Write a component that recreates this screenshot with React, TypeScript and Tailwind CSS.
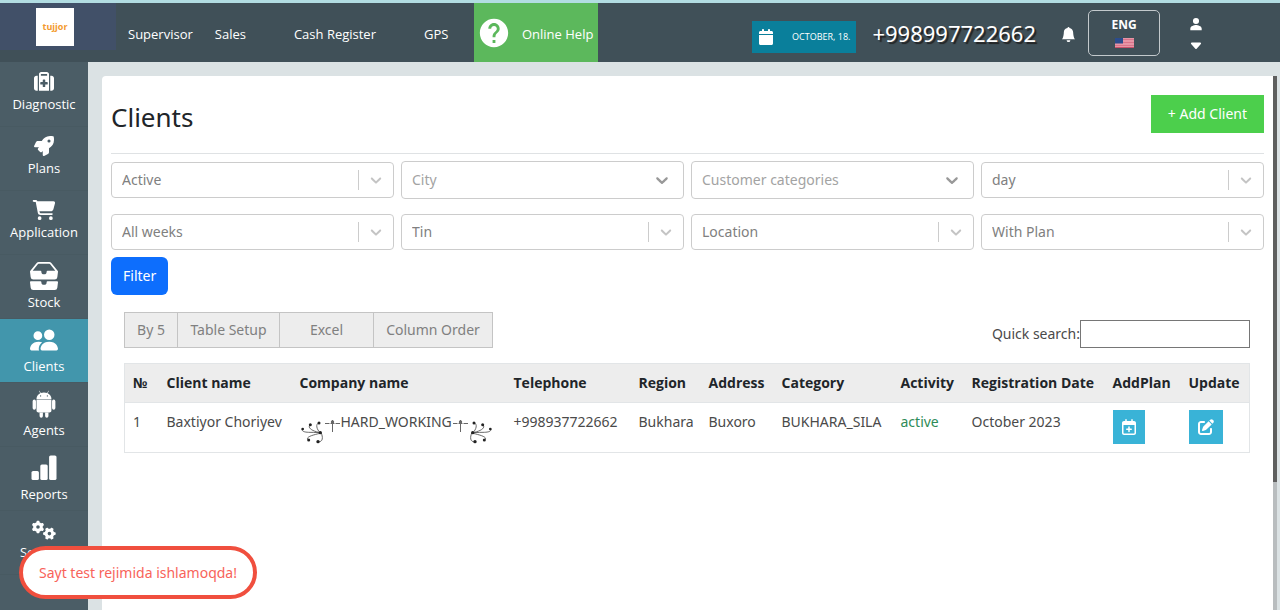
import React from "react";
import {
  FaSuitcaseMedical,
  FaCartShopping,
  FaGears,
  FaRegCalendarPlus,
  FaPenToSquare,
  FaCalendar,
} from "react-icons/fa6";
import { FaRocket } from "react-icons/fa";
import { DiAndroid } from "react-icons/di";
import { IoPersonSharp } from "react-icons/io5";
import { BsInboxesFill, BsPeopleFill, BsBellFill, BsCaretDownFill } from "react-icons/bs";
import { MdHelp } from "react-icons/md";

type IconProps = { className?: string };
type SideItem = {
  label: string;
  icon: React.ComponentType<IconProps>;
  large?: boolean;
  active?: boolean;
};

function BarsIcon({ className }: IconProps) {
  return (
    <svg viewBox="0 0 28 28" className={className} fill="currentColor" aria-hidden="true">
      <rect x="1.5" y="17" width="7.4" height="9" rx="1.6" />
      <rect x="10.3" y="10.5" width="7.4" height="15.5" rx="1.6" />
      <rect x="19.1" y="1.5" width="7.4" height="24.5" rx="1.6" />
    </svg>
  );
}

const sideItems: SideItem[] = [
  { label: "Diagnostic", icon: FaSuitcaseMedical },
  { label: "Plans", icon: FaRocket },
  { label: "Application", icon: FaCartShopping },
  { label: "Stock", icon: BsInboxesFill, large: true },
  { label: "Clients", icon: BsPeopleFill, large: true, active: true },
  { label: "Agents", icon: DiAndroid, large: true },
  { label: "Reports", icon: BarsIcon, large: true },
  { label: "Settings", icon: FaGears },
];

type Filter = { label: string; plain?: boolean };

const filters: Filter[] = [
  { label: "Active" },
  { label: "City", plain: true },
  { label: "Customer categories", plain: true },
  { label: "day" },
  { label: "All weeks" },
  { label: "Tin" },
  { label: "Location" },
  { label: "With Plan" },
];

const columns = [
  { title: "№", width: "w-[34px]" },
  { title: "Client name", width: "w-[133px]" },
  { title: "Company name", width: "w-[214px]" },
  { title: "Telephone", width: "w-[125px]" },
  { title: "Region", width: "w-[70px]" },
  { title: "Address", width: "w-[73px]" },
  { title: "Category", width: "w-[119px]" },
  { title: "Activity", width: "w-[71px]" },
  { title: "Registration Date", width: "w-[141px]" },
  { title: "AddPlan", width: "w-[76px]" },
  { title: "Update", width: "w-[69px]" },
];

function Chevron({ className }: IconProps) {
  return (
    <svg viewBox="0 0 20 20" className={className} fill="currentColor" aria-hidden="true">
      <path d="M4.516 7.548c0.436-0.446 1.043-0.481 1.576 0l3.908 3.747 3.908-3.747c0.533-0.481 1.141-0.446 1.574 0 0.436 0.445 0.408 1.197 0 1.615-0.406 0.418-4.695 4.502-4.695 4.502-0.217 0.223-0.502 0.335-0.787 0.335s-0.57-0.112-0.789-0.335c0 0-4.287-4.084-4.695-4.502s-0.436-1.17 0-1.615z" />
    </svg>
  );
}

function FilterSelect({ label, plain }: Filter) {
  return (
    <div
      className={`flex items-center rounded border border-[#cccccc] bg-white ${plain ? "h-[38px]" : "h-9"}`}
    >
      <select
        aria-label={label}
        className={`h-full min-w-0 flex-1 appearance-none bg-transparent px-[10px] outline-none ${
          plain ? "text-[#a3a3a3]" : "text-[#808080]"
        }`}
      >
        <option>{label}</option>
      </select>
      {!plain && <span className="h-5 w-px bg-[#cccccc]" />}
      <span className={plain ? "px-[11px] text-[#999999]" : "px-2 text-[#c4c4c4]"}>
        <Chevron className={plain ? "size-5" : "size-[18px]"} />
      </span>
    </div>
  );
}

function Flourish({ flipped }: { flipped?: boolean }) {
  return (
    <svg
      viewBox="0 0 72 72"
      className={`size-6 shrink-0 self-end ${flipped ? "-scale-x-100" : ""}`}
      fill="none"
      stroke="#444"
      strokeWidth="2.4"
      strokeLinecap="round"
      aria-hidden="true"
    >
      <path d="M7 27C3 34 14 37 30 37S52 38 60 38" />
      <path d="M30 14C20 25 40 34 60 38" />
      <path d="M57 8C45 12 50 28 60 38" />
      <path d="M25 60C14 52 34 46 60 40" />
      <path d="M54 65C70 68 69 50 64 40" />
      <g fill="#222" stroke="none">
        <circle cx="8" cy="27" r="4" />
        <circle cx="31" cy="14" r="4.5" />
        <circle cx="57" cy="9" r="4.5" />
        <circle cx="61" cy="38" r="5" />
        <circle cx="26" cy="60" r="4.5" />
        <circle cx="54" cy="65" r="5" />
      </g>
    </svg>
  );
}

function Dagger() {
  return (
    <svg viewBox="0 0 17 20" className="h-5 w-[17px] shrink-0" fill="none" stroke="#666" aria-hidden="true">
      <path d="M1 11.5H5.5M6.5 11.5H10.5M11.5 11.5H16" strokeWidth="1.2" />
      <path d="M8.5 8V20" strokeWidth="1" />
      <circle cx="8.5" cy="10" r="1.7" fill="#666" stroke="none" />
    </svg>
  );
}

function UsFlag() {
  return (
    <svg viewBox="0 0 19 10" className="h-[10px] w-[19px]" aria-hidden="true">
      <rect width="19" height="10" fill="#e795a5" />
      <path d="M0 1.5h19M0 4.5h19M0 7.5h19" stroke="#d9748a" strokeWidth="1" />
      <path d="M0 9.5h19" stroke="#c9516b" strokeWidth="1" />
      <rect width="8" height="5.5" fill="#2b4c8c" />
    </svg>
  );
}

function Header() {
  return (
    <header className="flex h-[62px] shrink-0 border-t-[3px] border-[#b2dde2] bg-[#405058] text-[13px] text-white">
      <div className="flex h-[47px] w-[116px] shrink-0 bg-[#415068] pt-[5px] pl-9">
        <div className="flex size-[38px] items-center justify-center bg-white pb-px font-['Open_Sans',sans-serif] text-[9px] font-bold text-[#f39a2e]">
          tujjor
        </div>
      </div>
      <nav className="flex shrink-0 items-stretch pl-3">
        <a href="#supervisor" className="flex items-center pt-[3px]">Supervisor</a>
        <a href="#sales" className="ml-[22px] flex items-center pt-[3px]">Sales</a>
        <a href="#cash" className="ml-12 flex items-center pt-[3px]">Cash Register</a>
        <a href="#gps" className="ml-12 flex items-center pt-[3px]">GPS</a>
        <a href="#help" className="ml-[26px] flex w-[124px] items-center justify-between bg-[#5cb85c] pr-[5px] pl-[3px]">
          <MdHelp className="size-[34px]" />
          <span className="pt-[3px]">Online Help</span>
        </a>
      </nav>
      <div className="mr-[76px] ml-auto flex shrink-0 items-center">
        <div className="mt-[18px] flex h-8 w-[104px] items-center justify-between self-start bg-[#0a7f9b] px-[6px]">
          <FaCalendar className="size-4" />
          <span className="text-[9px]">OCTOBER, 18.</span>
        </div>
        <span className="ml-4 font-['Noto_Sans',sans-serif] text-[22px] leading-7 [text-shadow:2px_2px_1px_#222]">
          +998997722662
        </span>
        <button aria-label="Notifications" className="mt-1 ml-[25px]">
          <BsBellFill className="size-[15px]" />
        </button>
        <button className="ml-3 flex h-[46px] w-[72px] flex-col items-center gap-1 rounded-[5px] border border-[#c3c9cc] pt-[5px] text-[12px] leading-[18px] font-bold">
          ENG
          <UsFlag />
        </button>
        <button aria-label="Account" className="mt-1 ml-7 flex w-4 flex-col items-center gap-2">
          <IoPersonSharp className="size-[14px]" />
          <BsCaretDownFill className="size-[14px]" />
        </button>
      </div>
    </header>
  );
}

function Sidebar() {
  return (
    <nav className="w-[88px] shrink-0 overflow-hidden bg-[#4b5d66] pt-px text-[13px] leading-5 text-white">
      {sideItems.map(({ label, icon: Icon, large, active }) => (
        <a
          key={label}
          href={`#${label.toLowerCase()}`}
          className={`flex h-16 flex-col items-center gap-0.5 border-b border-[#485a62] ${
            large ? "pt-[7px]" : "pt-[9px]"
          } ${active ? "bg-[#4296ac]" : ""}`}
        >
          <Icon className={large ? "size-7" : "h-5 w-6"} />
          <span>{label}</span>
        </a>
      ))}
    </nav>
  );
}

function ClientsTable() {
  return (
    <table className="mt-[15px] w-full table-fixed border-collapse border border-[#e2e5e7] text-left text-[#4a4a4a]">
      <thead className="bg-[#ededed] font-['Open_Sans',sans-serif] text-[#212529]">
        <tr className="h-[39px]">
          {columns.map((column) => (
            <th key={column.title} className={`px-2 font-bold whitespace-nowrap ${column.width}`}>
              {column.title}
            </th>
          ))}
        </tr>
      </thead>
      <tbody>
        <tr className="h-[50px] border-t border-[#e2e5e7] align-top whitespace-nowrap *:px-2 *:pt-[9px]">
          <td>1</td>
          <td>Baxtiyor Choriyev</td>
          <td>
            <div className="flex h-8">
              <Flourish />
              <Dagger />
              <span>HARD_WORKING</span>
              <Dagger />
              <Flourish flipped />
            </div>
          </td>
          <td>+998937722662</td>
          <td>Bukhara</td>
          <td>Buxoro</td>
          <td>BUKHARA_SILA</td>
          <td className="text-[#2e8b57]">active</td>
          <td>October 2023</td>
          <td className="pt-[7px]!">
            <button aria-label="Add plan" className="flex h-[34px] w-8 items-center justify-center bg-[#39b3d7] text-white">
              <FaRegCalendarPlus className="size-4" />
            </button>
          </td>
          <td className="pt-[7px]!">
            <button aria-label="Update client" className="flex size-[34px] items-center justify-center bg-[#39b3d7] text-white">
              <FaPenToSquare className="size-4" />
            </button>
          </td>
        </tr>
      </tbody>
    </table>
  );
}

export default function App() {
  return (
    <div className="flex h-screen flex-col overflow-hidden bg-[#dbe2e4] font-['Open_Sans','Noto_Sans',sans-serif] text-[14px] leading-5">
      <Header />
      <div className="flex min-h-0 flex-1">
        <Sidebar />
        <div className="flex min-w-0 flex-1 pt-[14px] pr-[3px] pl-[14px] font-['Noto_Sans',sans-serif]">
          <main className="min-w-0 flex-1 overflow-hidden rounded-tl bg-white pt-[19px] pr-[9px] pl-[9px]">
            <div className="flex justify-between border-b border-[#dfe2e4] pb-[18px]">
              <h1 className="pt-1 text-[26px] leading-9 text-[#212529]">Clients</h1>
              <button className="h-[38px] bg-[#4ccf4c] px-[17px] text-white">+ Add Client</button>
            </div>
            <div className="mt-[7px] grid grid-cols-4 items-center gap-x-[7px] gap-y-[15px]">
              {filters.map((filter) => (
                <FilterSelect key={filter.label} {...filter} />
              ))}
            </div>
            <button className="mt-[7px] h-[38px] rounded-md bg-[#0d6efd] px-3 text-white">Filter</button>
            <section className="mt-[17px] pr-[14px] pl-[13px]">
              <div className="flex items-center justify-between">
                <div className="flex h-9 divide-x divide-[#c4c4c4] border border-[#c4c4c4] bg-[#ededed] text-[#808080]">
                  <button className="w-[53px]">By 5</button>
                  <button className="w-[102px]">Table Setup</button>
                  <button className="w-[94px]">Excel</button>
                  <button className="w-[118px]">Column Order</button>
                </div>
                <label className="flex items-center pt-2 text-[#4a4a4a]">
                  Quick search:
                  <input type="text" className="h-7 w-[170px] border border-[#767676] bg-white px-2 text-black outline-none" />
                </label>
              </div>
              <ClientsTable />
            </section>
          </main>
          <div className="w-1 bg-[#b9bdbf]">
            <div className="h-[76%] bg-[#5f5f5f]" />
          </div>
        </div>
      </div>
      <div
        role="status"
        className="fixed bottom-[11px] left-[19px] flex h-[53px] w-[238px] items-center justify-center rounded-full border-4 border-[#f04f3e] bg-white font-['Noto_Sans',sans-serif] whitespace-nowrap text-[#f8635a]"
      >
        Sayt test rejimida ishlamoqda!
      </div>
    </div>
  );
}
